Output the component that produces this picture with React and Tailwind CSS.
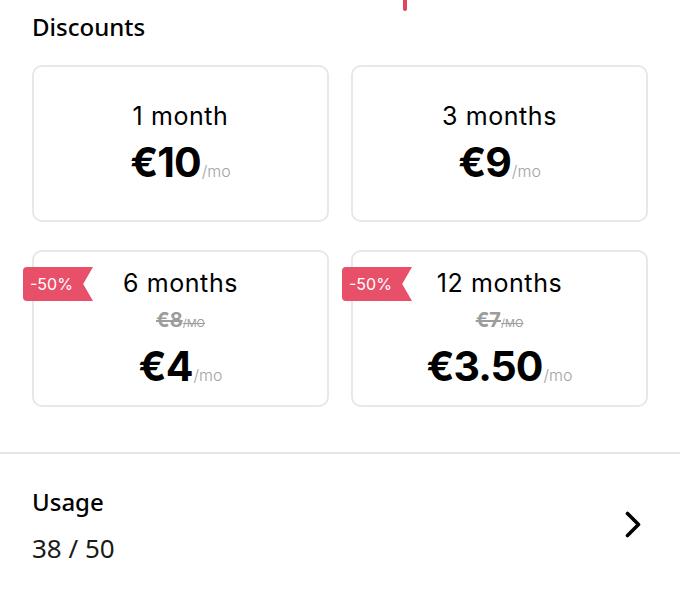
import React from "react";

const plans = [
  { label: "1 month", price: "€10" },
  { label: "3 months", price: "€9" },
  { label: "6 months", price: "€4", old: "€8", badge: "-50%" },
  { label: "12 months", price: "€3.50", old: "€7", badge: "-50%" },
];

function PlanCard({ label, price, old, badge }) {
  return (
    <div
      className={`relative flex h-[157px] flex-col items-center rounded-[10px] border-2 border-[#e8e8ea] bg-white font-['Inter',sans-serif] text-black ${
        old ? "pt-[16px]" : "pt-[34px]"
      }`}
    >
      {badge && (
        <div className="absolute left-[-11px] top-[15px] flex h-[34px] w-[70px] items-center rounded-l-[4px] bg-[#e8506a] pl-[7px] text-[16px] text-white [clip-path:polygon(0_0,100%_0,86%_50%,100%_100%,0_100%)]">
          {badge}
        </div>
      )}
      <div className="text-[25px] leading-[30px] tracking-[0.6px]">{label}</div>
      {old && (
        <div className="mt-[12px] flex items-baseline leading-[20px] text-[#9d9d9d] line-through">
          <span className="text-[20px] font-bold">{old}</span>
          <span className="text-[11px] uppercase">/mo</span>
        </div>
      )}
      <div className={`${old ? "mt-[10px]" : "mt-[8px]"} flex items-baseline leading-[46px]`}>
        <span className="text-[41px] font-bold tracking-[-1px]">{price}</span>
        <span className="ml-[1px] text-[16px] font-light text-[#a3a3a3]">/mo</span>
      </div>
    </div>
  );
}

export default function App() {
  return (
    <div className="relative h-[593px] w-[680px] overflow-hidden bg-white font-['Noto_Sans',sans-serif]">
      <div className="absolute left-[403px] top-0 h-[11px] w-[4px] rounded-b-full bg-[#e0455f]" />

      <h2 className="px-[32px] pt-[12px] text-[24px] font-medium leading-[30px] text-black">
        Discounts
      </h2>

      <div className="mt-[23px] grid grid-cols-2 gap-x-[22px] gap-y-[28px] px-[32px]">
        {plans.map((p) => (
          <PlanCard key={p.label} {...p} />
        ))}
      </div>

      <div className="mt-[45px] h-[2px] bg-[#e6e6e8]" />

      <div className="flex items-center justify-between pl-[32px] pr-[38px] pt-[33px]">
        <div>
          <div className="text-[24px] font-medium leading-[30px] text-black">Usage</div>
          <div className="mt-[16px] text-[26px] leading-[30px] text-[#1a1a1a]">38 / 50</div>
        </div>
        <svg width="18" height="27" viewBox="0 0 18 27" fill="none" className="mb-[2px]">
          <path d="M3.5 2.5l11 11-11 11" stroke="black" strokeWidth="3.6" strokeLinecap="round" strokeLinejoin="round" />
        </svg>
      </div>
    </div>
  );
}
